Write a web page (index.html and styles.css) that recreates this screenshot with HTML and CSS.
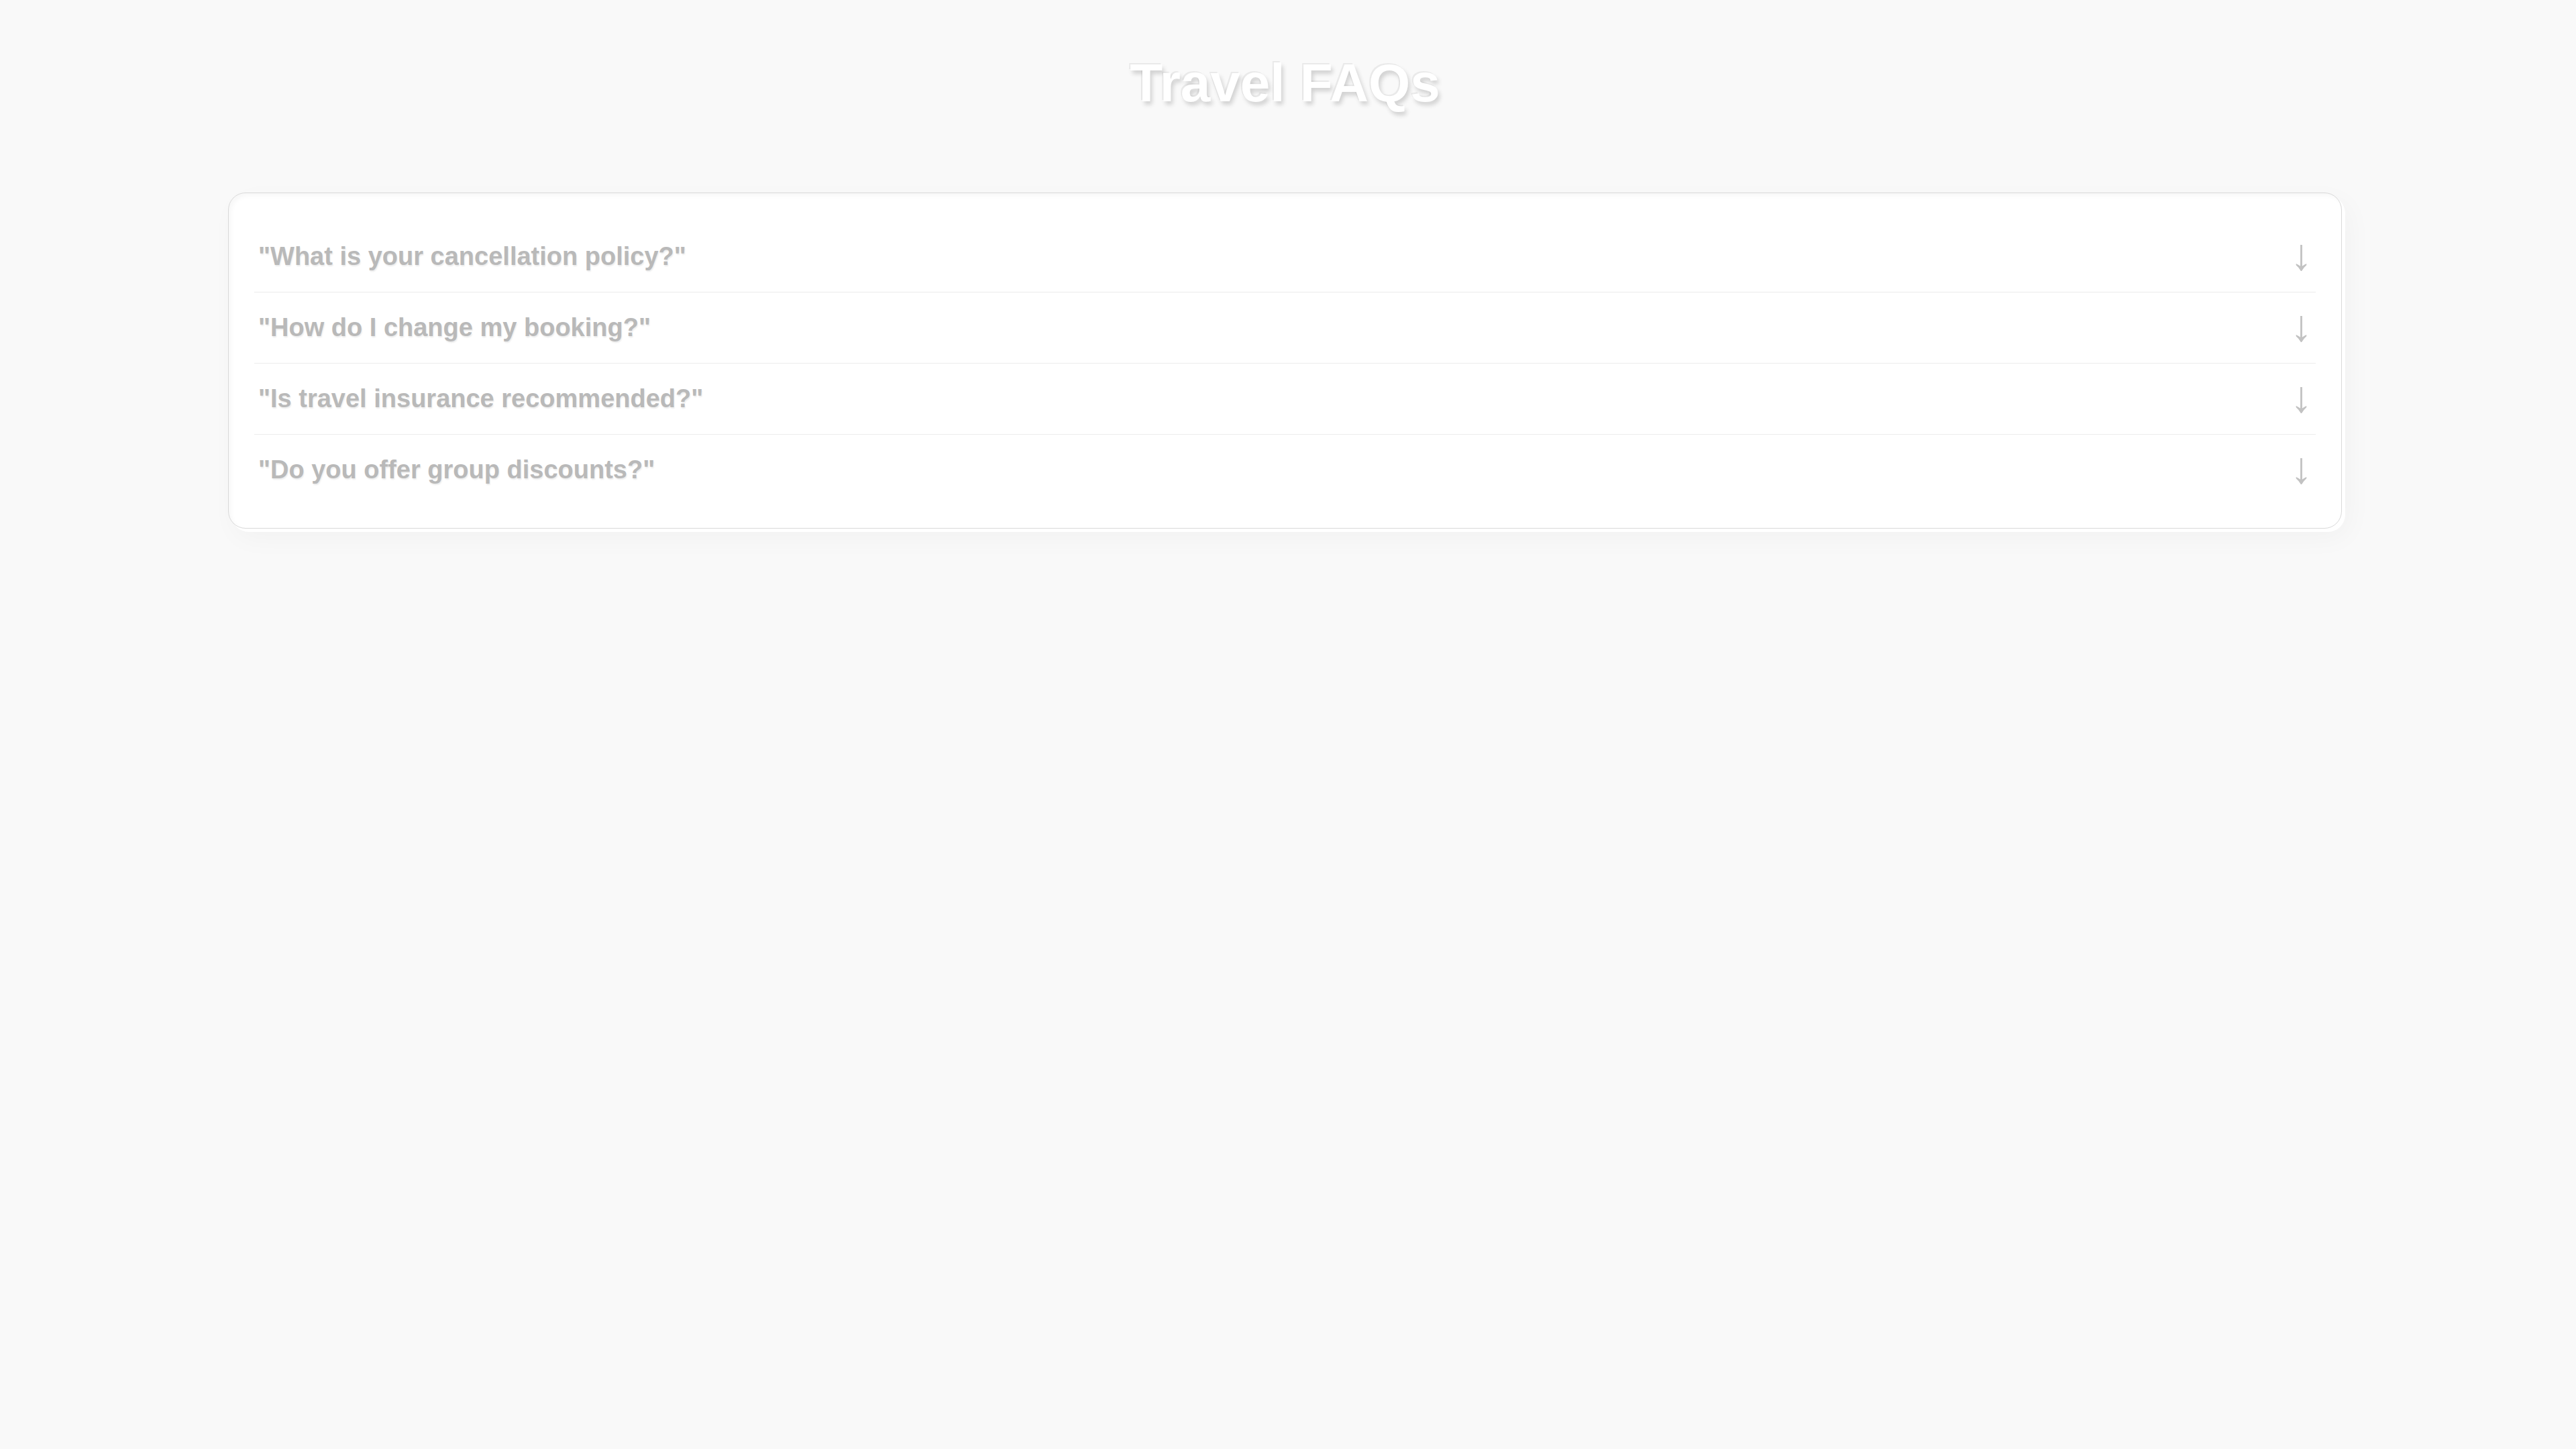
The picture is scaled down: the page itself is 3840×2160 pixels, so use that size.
FILE: index.html
```html
<!DOCTYPE html>
<html lang="en">
<head>
<meta charset="utf-8">
<title>Travel FAQs</title>
<link rel="stylesheet" href="styles.css">
</head>
<body>
<main class="page">
  <h1 class="title">Travel FAQs</h1>
  <section class="faq-card">
    <div class="faq-row"><span class="faq-q">"What is your cancellation policy?"</span><span class="faq-arrow">↓</span></div>
    <div class="faq-row"><span class="faq-q">"How do I change my booking?"</span><span class="faq-arrow">↓</span></div>
    <div class="faq-row"><span class="faq-q">"Is travel insurance recommended?"</span><span class="faq-arrow">↓</span></div>
    <div class="faq-row"><span class="faq-q">"Do you offer group discounts?"</span><span class="faq-arrow">↓</span></div>
  </section>
</main>
</body>
</html>
```

FILE: styles.css
```css
html, body {
  margin: 0;
  padding: 0;
  background: #f9f9f9;
}
body {
  font-family: "Liberation Sans", Arial, sans-serif;
  min-height: 2160px;
}
.page {
  display: flex;
  flex-direction: column;
  align-items: center;
  padding: 78px 9px 0 0;
}
.title {
  margin: 0 0 117px 0;
  font-size: 80px;
  font-weight: 700;
  color: #ffffff;
  line-height: normal;
  text-shadow: -2px -2px 0 rgba(0, 0, 0, 0.06), 3px 5px 6px rgba(0, 0, 0, 0.16);
}
.faq-card {
  box-sizing: border-box;
  width: 3151px;
  padding: 42px 38px 34px 38px;
  background: #ffffff;
  border: 1px solid #d9d9d9;
  border-radius: 26px;
  box-shadow: 5px 5px 0 #ffffff, 10px 14px 40px rgba(0, 0, 0, 0.035), inset 4px 4px 6px rgba(0, 0, 0, 0.03);
}
.faq-row {
  display: flex;
  justify-content: space-between;
  align-items: center;
  height: 43px;
  padding: 31px 5px 31px 6px;
  border-bottom: 1px solid #ececec;
}
.faq-row:last-child {
  border-bottom: none;
}
.faq-q {
  font-size: 38px;
  font-weight: 700;
  color: #b9b9b9;
  line-height: normal;
  text-shadow: 1px 2px 2px rgba(0, 0, 0, 0.08);
}
.faq-arrow {
  font-family: "Liberation Sans", Arial, sans-serif;
  font-size: 66px;
  line-height: 43px;
  margin-top: -6px;
  color: #c2c2c2;
}
```
